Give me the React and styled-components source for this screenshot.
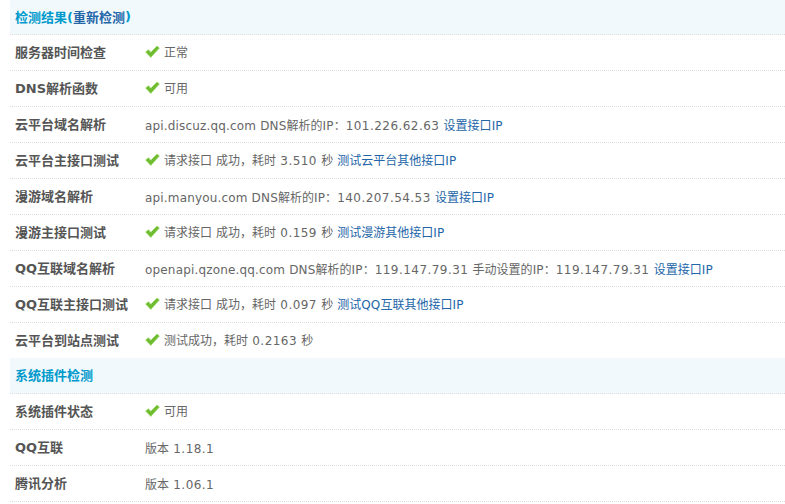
import React from "react";
import styled, { createGlobalStyle } from "styled-components";

const GlobalStyle = createGlobalStyle`
  html, body {
    margin: 0;
    background: #fff;
    overflow: hidden;
  }
  body {
    font: 12px "DejaVu Sans", "Noto Sans CJK SC", sans-serif;
    color: #666;
  }
`;

const Page = styled.div`
  padding-left: 10px;
  width: 775px;
  height: 504px;
  overflow: hidden;
`;

const SectionHead = styled.div`
  height: 35px;
  box-sizing: border-box;
  padding: 0 5px 2px;
  display: flex;
  align-items: center;
  background: #f2f9fd;
  border-bottom: 1px dotted #ddd;
  color: #09c;
  font-size: 13px;
  font-weight: 700;
  white-space: pre;
  a {
    color: #2366a8;
  }
  div + & {
    height: 36px;
    margin-top: -1px;
  }
`;

const Row = styled.div`
  height: 36px;
  box-sizing: border-box;
  padding: 0 5px;
  display: flex;
  align-items: center;
  border-bottom: 1px dotted #ddd;
`;

const Label = styled.div`
  width: 130px;
  flex: none;
  margin-top: -2px;
  font-size: 13px;
  font-weight: 700;
  color: #555;
`;

const Value = styled.div`
  display: flex;
  align-items: center;
  white-space: pre;
  margin-top: ${(p) => (p.$ok ? "-2px" : "0")};
`;

const Latin = styled.span`
  letter-spacing: ${(p) => (p.$num ? "0.45px" : "0.17px")};
`;

const Link = styled.a`
  color: #2366a8;
  text-decoration: none;
`;

const CheckSvg = styled.svg`
  width: 15px;
  height: 13px;
  margin-right: 4px;
  flex: none;
`;

const Check = () => (
  <CheckSvg viewBox="0 0 15 13">
    <path d="M0.6 7 L3.4 4.8 L5.8 7.2 L12 1 L14.4 3 L5.8 12.4 Z" fill="#6fbd2f" stroke="#9ad866" strokeWidth="0.6" />
  </CheckSvg>
);

// ascii runs are a bit wider in the original than in DejaVu, numbers most of all
const spaced = (text) =>
  text.split(/(\s?\d[\d.]*\s?|[\x00-\x7f]+)/).map((part, i) =>
    /^[\x00-\x7f]+$/.test(part) ? (
      <Latin key={i} $num={/^\s?\d/.test(part)}>
        {part}
      </Latin>
    ) : (
      part
    )
  );

const rows1 = [
  ["服务器时间检查", true, "正常"],
  ["DNS解析函数", true, "可用"],
  ["云平台域名解析", false, "api.discuz.qq.com DNS解析的IP：101.226.62.63 ", "设置接口IP"],
  ["云平台主接口测试", true, "请求接口 成功，耗时 3.510 秒 ", "测试云平台其他接口IP"],
  ["漫游域名解析", false, "api.manyou.com DNS解析的IP：140.207.54.53 ", "设置接口IP"],
  ["漫游主接口测试", true, "请求接口 成功，耗时 0.159 秒 ", "测试漫游其他接口IP"],
  ["QQ互联域名解析", false, "openapi.qzone.qq.com DNS解析的IP：119.147.79.31 手动设置的IP：119.147.79.31 ", "设置接口IP"],
  ["QQ互联主接口测试", true, "请求接口 成功，耗时 0.097 秒 ", "测试QQ互联其他接口IP"],
  ["云平台到站点测试", true, "测试成功，耗时 0.2163 秒"],
];

const rows2 = [
  ["系统插件状态", true, "可用"],
  ["QQ互联", false, "版本 1.18.1"],
  ["腾讯分析", false, "版本 1.06.1"],
];

const renderRow = ([label, ok, text, link]) => (
  <Row key={label}>
    <Label>{label}</Label>
    <Value $ok={ok}>
      {ok && <Check />}
      <span>{spaced(text)}</span>
      {link && <Link href="#">{spaced(link)}</Link>}
    </Value>
  </Row>
);

export default function App() {
  return (
    <Page>
      <GlobalStyle />
      <SectionHead>检测结果(<a>重新检测</a>)</SectionHead>
      {rows1.map(renderRow)}
      <SectionHead>系统插件检测</SectionHead>
      {rows2.map(renderRow)}
    </Page>
  );
}
